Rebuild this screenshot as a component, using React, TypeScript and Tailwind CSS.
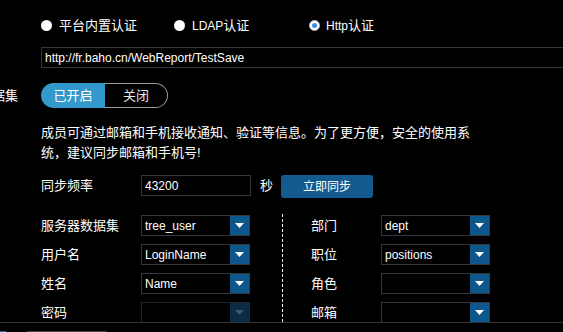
import React from "react";

const Arrow = ({ disabled }: { disabled?: boolean }) => (
  <div
    className={
      "w-[19px] h-full flex items-center justify-center " +
      (disabled ? "bg-[#0b2c44]" : "bg-[#0e578a]")
    }
  >
    <svg width="9" height="5" viewBox="0 0 9 5">
      <path d="M0 0 L9 0 L4.5 5 Z" fill={disabled ? "#4a5560" : "#ffffff"} />
    </svg>
  </div>
);

const Select = ({ value, disabled }: { value?: string; disabled?: boolean }) => (
  <div
    className={
      "w-[109px] h-[21px] flex items-stretch border " +
      (disabled ? "border-[#24242c]" : "border-[#363642]")
    }
  >
    <div className="flex-1 flex items-center pl-[3px] text-[12px] leading-none whitespace-nowrap overflow-hidden">
      {value}
    </div>
    <Arrow disabled={disabled} />
  </div>
);

const Row = ({ label, labelW, children }: { label: string; labelW: string; children: React.ReactNode }) => (
  <div className="flex items-center h-[21px]">
    <div className={labelW + " leading-none whitespace-nowrap"}>{label}</div>
    {children}
  </div>
);

export default function App() {
  return (
    <div className="w-[563px] h-[332px] bg-black overflow-hidden text-white text-[13px] font-['Liberation_Sans','Noto_Sans_CJK_SC',sans-serif]">
      <div className="h-[322px] overflow-hidden">
        {/* radios */}
        <div className="mt-[14px] h-[22px] pl-[41px] flex items-center">
          <div className="w-[133px] flex items-center">
            <div className="w-[11px] h-[11px] rounded-full bg-white" />
            <span className="ml-[7px] leading-none">平台内置认证</span>
          </div>
          <div className="w-[135px] flex items-center">
            <div className="w-[11px] h-[11px] rounded-full bg-white" />
            <span className="ml-[7px] leading-none">
              <span className="text-[12px]">LDAP</span>认证
            </span>
          </div>
          <div className="flex items-center">
            <div className="w-[11px] h-[11px] rounded-full bg-white border border-[#bbb] flex items-center justify-center">
              <div className="w-[5px] h-[5px] rounded-full bg-[#3b8de8]" />
            </div>
            <span className="ml-[6px] leading-none">
              <span className="text-[12px]">Http</span>认证
            </span>
          </div>
        </div>

        {/* url */}
        <div className="mt-[11px] ml-[41px] h-[21px] border border-[#363642] border-r-0 flex items-center pl-[3px] text-[12px] leading-none">
          http://fr.baho.cn/WebReport/TestSave
        </div>

        {/* toggle */}
        <div className="mt-[15px] flex items-center h-[25px]">
          <div className="w-[18px] flex justify-end whitespace-nowrap leading-none">同步数据集</div>
          <div className="ml-[23px] flex h-[25px] w-[127px]">
            <div className="w-[64px] h-full rounded-l-full bg-[#3399cc] flex items-center justify-center leading-none">
              已开启
            </div>
            <div className="flex-1 h-full rounded-r-full border border-l-0 border-[#9a9a9a] flex items-center justify-center leading-none text-[#e8e8e8]">
              关闭
            </div>
          </div>
        </div>

        {/* paragraph */}
        <p className="mt-[15px] ml-[41px] w-[436px] leading-[20px]">
          成员可通过邮箱和手机接收通知、验证等信息。为了更方便，安全的使用系统，建议同步邮箱和手机号!
        </p>

        {/* sync */}
        <div className="mt-[12px] ml-[41px] flex items-start h-[23px]">
          <div className="w-[100px] h-[21px] flex items-center leading-none">同步频率</div>
          <div className="w-[110px] h-[21px] border border-[#363642] flex items-center pl-[3px] text-[12px] leading-none">43200</div>
          <div className="ml-[9px] h-[21px] flex items-center leading-none">秒</div>
          <button className="ml-[8px] w-[92px] h-[23px] rounded-[3px] bg-[#135b8e] text-white text-[12px] leading-none">
            立即同步
          </button>
        </div>

        {/* mapping */}
        <div className="mt-[17px] ml-[41px] flex items-start">
          <div className="flex flex-col gap-[8px] w-[241px]">
            <Row label="服务器数据集" labelW="w-[100px]"><Select value="tree_user" /></Row>
            <Row label="用户名" labelW="w-[100px]"><Select value="LoginName" /></Row>
            <Row label="姓名" labelW="w-[100px]"><Select value="Name" /></Row>
            <Row label="密码" labelW="w-[100px]"><Select disabled /></Row>
          </div>
          <div className="-mt-[1px] w-px h-[120px] bg-[repeating-linear-gradient(to_bottom,#ffffff_0_3px,transparent_3px_5px)]" />
          <div className="ml-[28px] flex flex-col gap-[8px]">
            <Row label="部门" labelW="w-[70px]"><Select value="dept" /></Row>
            <Row label="职位" labelW="w-[70px]"><Select value="positions" /></Row>
            <Row label="角色" labelW="w-[70px]"><Select /></Row>
            <Row label="邮箱" labelW="w-[70px]"><Select /></Row>
          </div>
        </div>
      </div>
      <div className="h-[10px] border-t border-[#333] relative">
        <div className="absolute left-0 bottom-0 w-[6px] h-px bg-[#1e6fa8]" />
        <div className="absolute left-[27px] bottom-0 w-[80px] h-px bg-[#444]" />
      </div>
    </div>
  );
}
